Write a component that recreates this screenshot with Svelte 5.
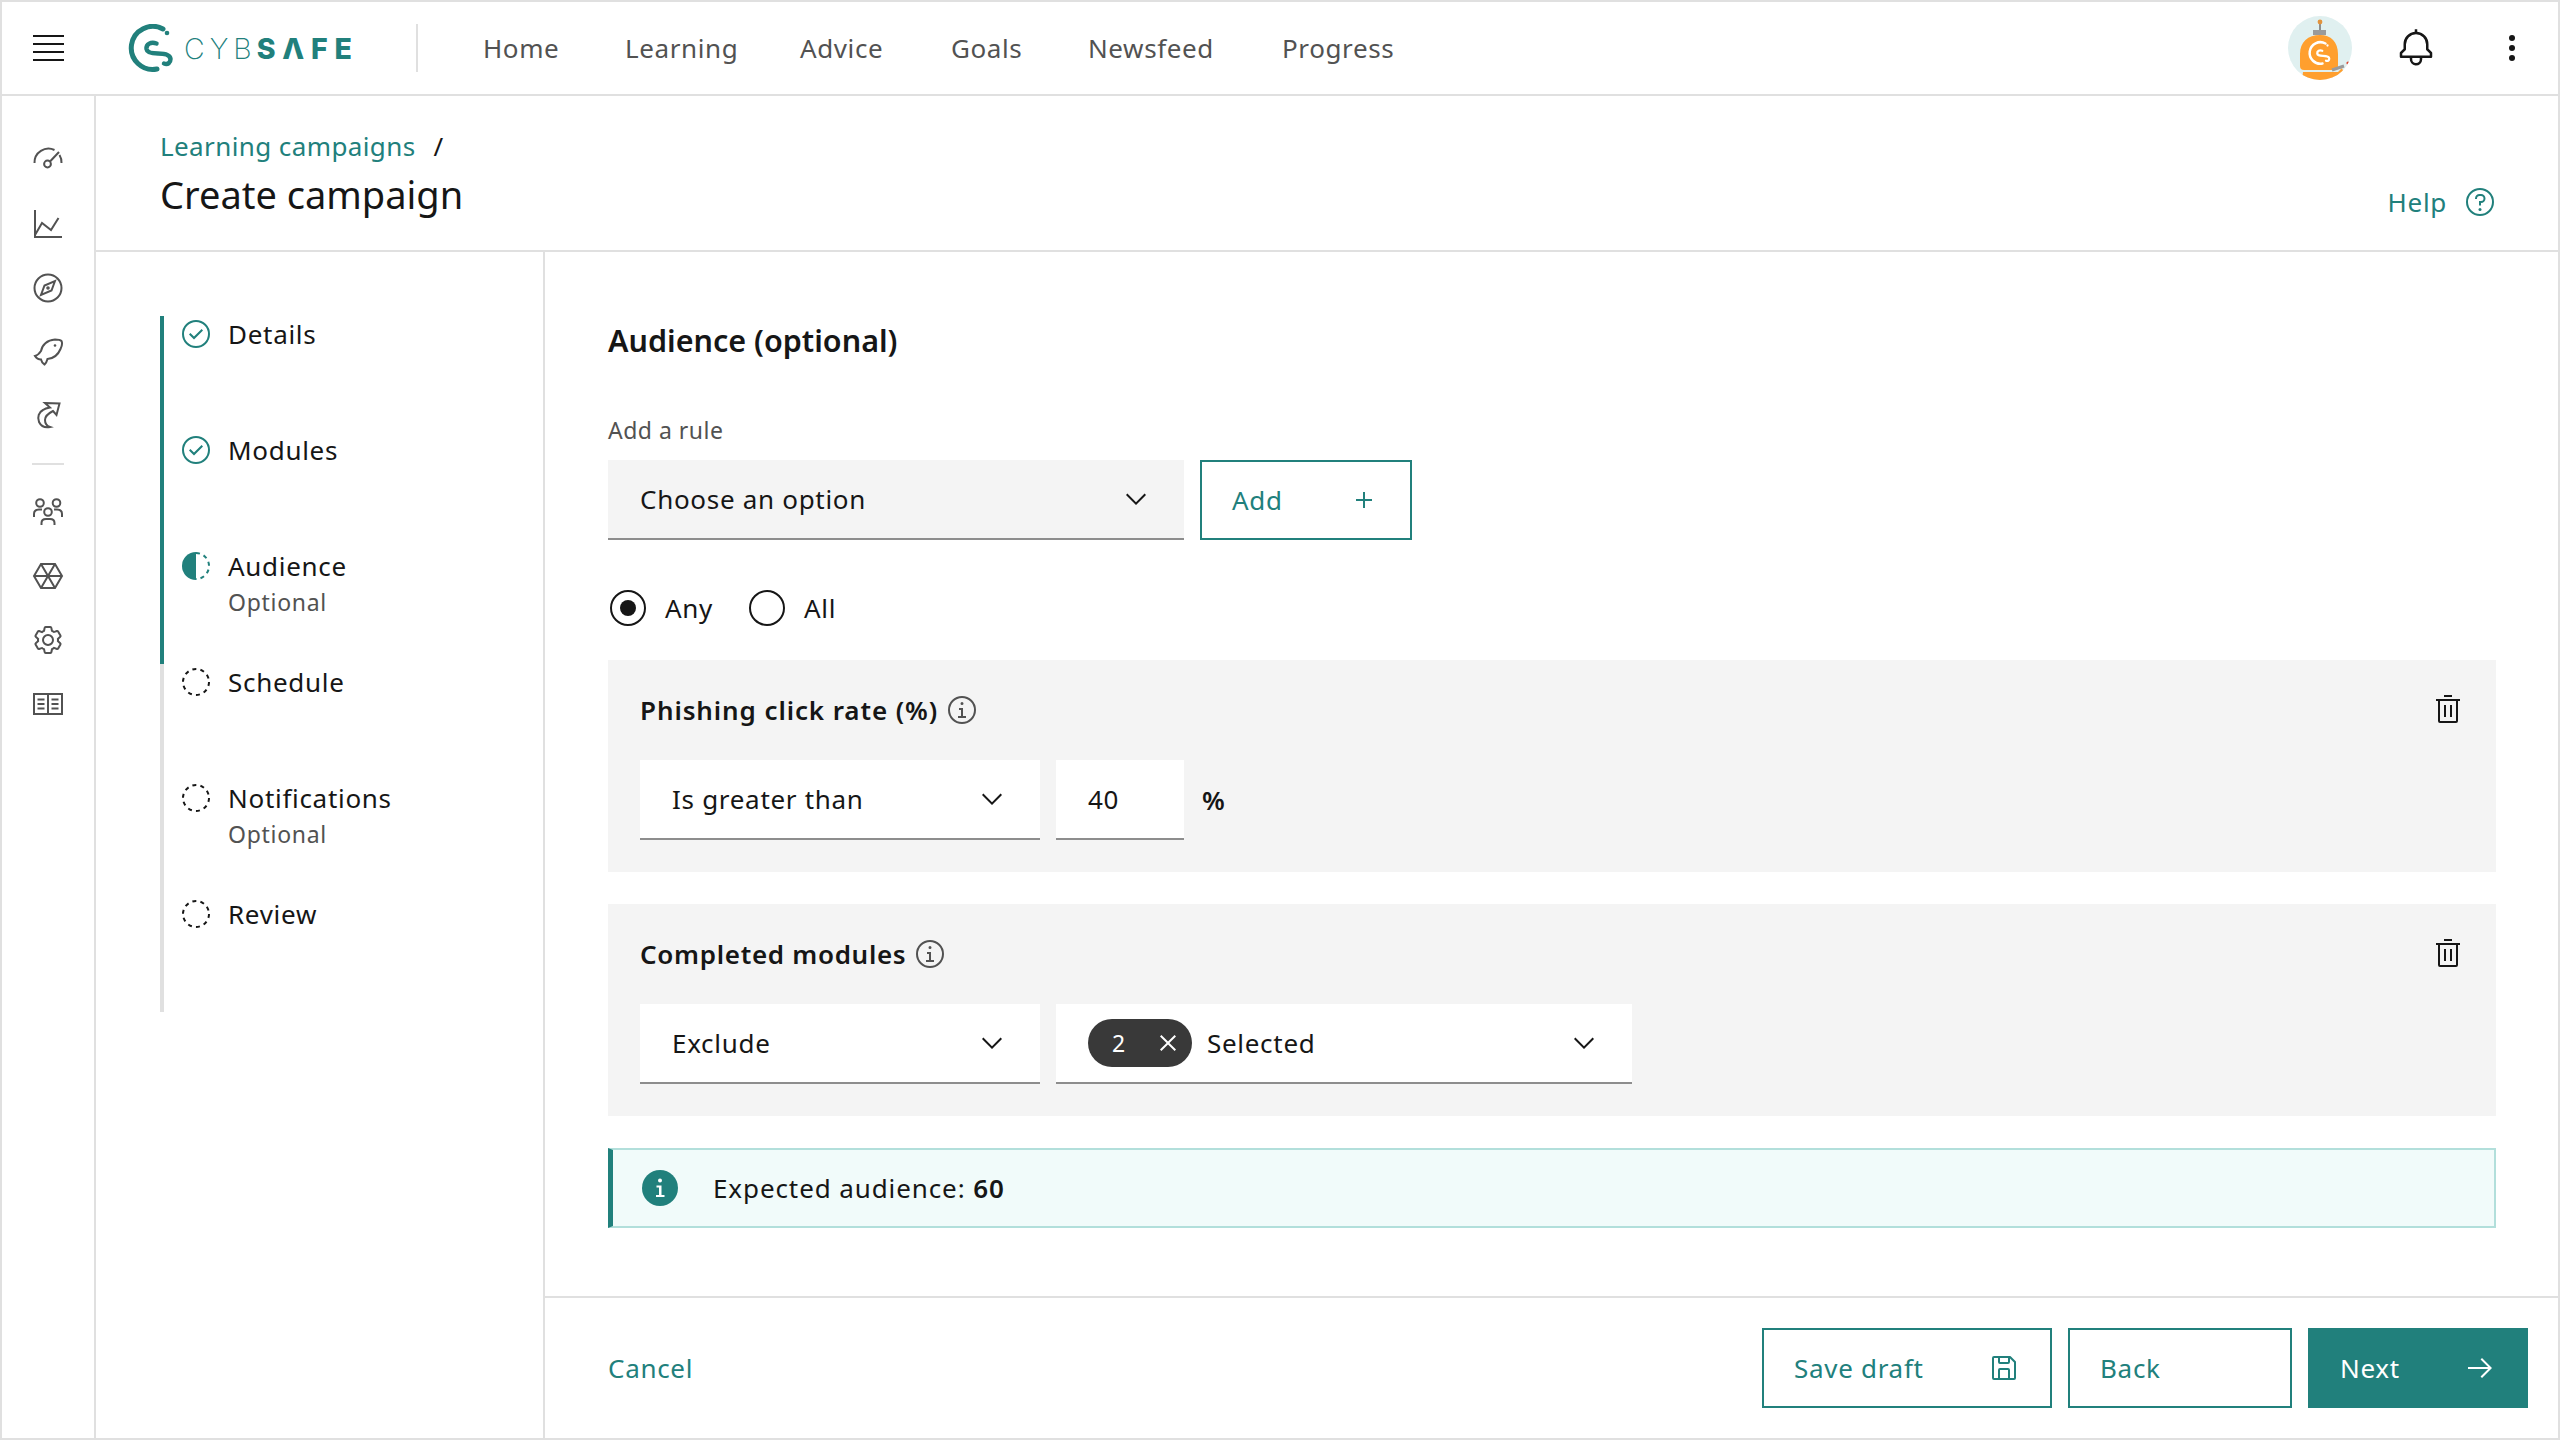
<script>
	const navItems = ['Home', 'Learning', 'Advice', 'Goals', 'Newsfeed', 'Progress'];

	const steps = [
		{ label: 'Details', state: 'done' },
		{ label: 'Modules', state: 'done' },
		{ label: 'Audience', note: 'Optional', state: 'current' },
		{ label: 'Schedule', state: 'todo' },
		{ label: 'Notifications', note: 'Optional', state: 'todo' },
		{ label: 'Review', state: 'todo' }
	];

	const chevron = 'M16 22L6 12 7.4 10.6 16 19.2 24.6 10.6 26 12z';
	const infoDot = 'M17 22L17 14 13 14 13 16 15 16 15 22 12 22 12 24 20 24 20 22 17 22zM16 8a1.5 1.5 0 101.5 1.5A1.5 1.5 0 0016 8z';
	const ring = 'M16,30A14,14,0,1,1,30,16,14,14,0,0,1,16,30ZM16,4A12,12,0,1,0,28,16,12,12,0,0,0,16,4Z';
	const trash = 'M12 12H14V24H12zM18 12H20V24H18zM4 6V8H6V28a2 2 0 002 2H24a2 2 0 002-2V8h2V6zM8 28V8H24V28zM12 2H20V4H12z';
</script>

{#snippet icon(d, cls = 'i32')}
	<svg class={cls} viewBox="0 0 32 32" fill="currentColor" aria-hidden="true"><path {d} /></svg>
{/snippet}

{#snippet logoMark()}
	<path d="M35 5A21.5 21.5 0 1 0 29 45" fill="none" stroke-width="5" stroke-linecap="round" />
	<path d="M28.5 19.5C23 17.5 18 20 18.5 25C19 29 24 29.5 30 29.5C36 29.5 42 30 42.5 35C42.5 38.5 40 41 36 39.5" fill="none" stroke-width="4.5" stroke-linecap="round" />
{/snippet}

<div class="app">
	<header class="topbar">
		<button class="burger" aria-label="Menu"><span></span><span></span><span></span><span></span></button>
		<div class="logo" aria-label="CybSafe">
			<svg class="logo-mark" viewBox="0 0 48 48" stroke="#21807c">
				{@render logoMark()}
				<circle cx="39" cy="9" r="2.3" fill="#21807c" stroke="none" />
			</svg>
			<span class="logo-text"><span class="thin">CYB</span><b>SΛFE</b></span>
		</div>
		<nav class="nav">
			{#each navItems as item}
				<a href="#top">{item}</a>
			{/each}
		</nav>
		<div class="top-actions">
			<svg class="avatar" viewBox="0 0 64 64" aria-hidden="true">
				<clipPath id="avatar-clip"><circle cx="32" cy="32" r="32" /></clipPath>
				<g clip-path="url(#avatar-clip)">
					<rect width="64" height="64" fill="#e0f0f0" />
					<rect x="31" y="6" width="2" height="10" fill="#8f8f8f" />
					<circle cx="32" cy="6" r="2.4" fill="#e2933d" />
					<rect x="25" y="14" width="13" height="5" fill="#9a9a9a" />
					<path d="M12 54V38C12 26 20 19 32 19C43 19 50 26 50 38V50Q50 54 46 54H16Q12 54 12 50Z" fill="#ff9f2e" />
					<path d="M15 56H42L50 56L54 52L58 64H14Z" fill="#ff9f2e" />
					<path d="M44 54L56 50" stroke="#9a9a9a" stroke-width="3" />
					<circle cx="60" cy="47" r="1.6" fill="#d9442f" />
					<g transform="translate(20 25) scale(0.5)" stroke="#fff">
						{@render logoMark()}
						<circle cx="39" cy="9" r="2.3" fill="#fff" stroke="none" />
					</g>
				</g>
			</svg>
			<svg class="bell" viewBox="0 0 32 32" fill="currentColor" aria-hidden="true">
				<path d="M28.7071,19.293,26,16.5859V13a10.0136,10.0136,0,0,0-9-9.9492V1H15V3.0508A10.0136,10.0136,0,0,0,6,13v3.5859L3.2929,19.293A1,1,0,0,0,3,20v3a1,1,0,0,0,1,1h7v.7768a5.152,5.152,0,0,0,4.5,5.1987A5.0057,5.0057,0,0,0,21,25V24h7a1,1,0,0,0,1-1V20A1,1,0,0,0,28.7071,19.293ZM19,25a3,3,0,0,1-6,0V24h6Zm8-3H5V20.4141L7.707,17.707A1,1,0,0,0,8,17V13a8,8,0,0,1,16,0v4a1,1,0,0,0,.293.707L27,20.4141Z" />
			</svg>
			<div class="kebab"><i></i><i></i><i></i></div>
		</div>
	</header>

	<div class="shell">
		<aside class="rail">
			<svg class="rail-icon" viewBox="0 0 32 32">
				<path d="M2.5 19A14 14 0 0 1 22.5 6" /><path d="M27.5 11A14 14 0 0 1 29.5 19" /><circle cx="15.5" cy="20" r="3.4" /><path d="M18 17.5L27 8" />
			</svg>
			<svg class="rail-icon" viewBox="0 0 32 32"><path d="M3 2V29H30" /><path d="M3 27L10 15L19 22L26.5 10" /></svg>
			<svg class="rail-icon" viewBox="0 0 32 32">
				<circle cx="16" cy="16" r="13.5" /><path d="M23 9L19.5 18.5L9 23L12.5 13.5Z" /><circle cx="16" cy="16" r="0.8" />
			</svg>
			<svg class="rail-icon" viewBox="0 0 32 32">
				<path d="M3 20C5 19.5 7 18 9 15C10 9 15 4 23 3.5C26 3.5 28 3.5 29.5 5C30.5 7 30 10 28.5 13C26 19 21 22.5 15.5 23C15 25 14 27 12.5 28.5C10.5 27.5 9.5 25.5 9 23.5C7 23.5 4.5 22.5 3 20Z" /><circle cx="23" cy="9.5" r="1.3" fill="#525252" stroke="none" />
			</svg>
			<svg class="rail-icon" viewBox="0 0 32 32">
				<path d="M13 3L27.5 3.5L24.5 15L21 11C17 13 13 16 13 20C13 23 15 26 18 27C13 28 9 26 7 22C5 17 7 12 11 10C13 8.5 15 8 18 7.5Z" />
			</svg>
			<div class="rail-rule"></div>
			<svg class="rail-icon" viewBox="0 0 32 32">
				<circle cx="8" cy="7" r="3.8" /><circle cx="24.5" cy="7" r="3.8" /><circle cx="16" cy="16" r="3.8" />
				<path d="M2 21V18C2 14.5 4 13.5 7 13.5H10" /><path d="M30 21V18C30 14.5 28 13.5 25 13.5H22" />
				<path d="M9.5 29V27C9.5 24 12 23 14 23H18C20 23 22.5 24 22.5 27V29" />
			</svg>
			<svg class="rail-icon" viewBox="0 0 32 32">
				<path d="M2 16L9 4H23L30 16L23 28H9Z" /><path d="M9 4L23 28M23 4L9 28M2 16H30" />
			</svg>
			<svg class="rail-gear" viewBox="0 0 32 32" fill="#525252">
				<path d="M27,16.76c0-.25,0-.5,0-.76s0-.51,0-.77l1.92-1.68A2,2,0,0,0,29.3,11L26.94,7a2,2,0,0,0-1.73-1,2,2,0,0,0-.64.1l-2.43.82a11.35,11.35,0,0,0-1.31-.75l-.51-2.52a2,2,0,0,0-2-1.61H13.64a2,2,0,0,0-2,1.61l-.51,2.52a11.48,11.48,0,0,0-1.32.75L7.43,6.06A2,2,0,0,0,6.79,6,2,2,0,0,0,5.06,7L2.7,11a2,2,0,0,0,.41,2.51L5,15.24c0,.25,0,.5,0,.76s0,.51,0,.77L3.11,18.45A2,2,0,0,0,2.7,21L5.06,25a2,2,0,0,0,1.73,1,2,2,0,0,0,.64-.1l2.43-.82a11.35,11.35,0,0,0,1.31.75l.51,2.52a2,2,0,0,0,2,1.61h4.72a2,2,0,0,0,2-1.61l.51-2.52a11.48,11.48,0,0,0,1.32-.75l2.42.82a2,2,0,0,0,.64.1,2,2,0,0,0,1.73-1L29.3,21a2,2,0,0,0-.41-2.51ZM25.21,24l-3.43-1.16a8.86,8.86,0,0,1-2.71,1.57L18.36,28H13.64l-.71-3.55a9.36,9.36,0,0,1-2.7-1.57L6.79,24,4.43,20l2.72-2.4a8.9,8.9,0,0,1,0-3.13L4.43,12,6.79,8l3.43,1.16a8.86,8.86,0,0,1,2.71-1.57L13.64,4h4.72l.71,3.55a9.36,9.36,0,0,1,2.7,1.57L25.21,8,27.57,12l-2.72,2.4a8.9,8.9,0,0,1,0,3.13L27.57,20Z" />
				<path d="M16,22a6,6,0,1,1,6-6A5.94,5.94,0,0,1,16,22Zm0-10a3.91,3.91,0,0,0-4,4,3.91,3.91,0,0,0,4,4,3.91,3.91,0,0,0,4-4A3.91,3.91,0,0,0,16,12Z" />
			</svg>
			<svg class="rail-icon" viewBox="0 0 32 32">
				<path d="M2 6H30V26H2Z" /><path d="M16 6V26M5.5 11.5H12.5M5.5 16H12.5M5.5 20.5H12.5M19.5 11.5H26.5M19.5 16H26.5M19.5 20.5H26.5" />
			</svg>
		</aside>

		<div class="page">
			<div class="page-head">
				<div>
					<div class="crumbs"><a href="#top">Learning campaigns</a><span class="slash">/</span></div>
					<h1>Create campaign</h1>
				</div>
				<a class="help" href="#top">Help
					<svg class="i32" viewBox="0 0 32 32" fill="currentColor" aria-hidden="true">
						<path d="M16,2A14,14,0,1,0,30,16,14,14,0,0,0,16,2Zm0,26A12,12,0,1,1,28,16,12,12,0,0,1,16,28Z" />
						<circle cx="16" cy="23.5" r="1.5" />
						<path d="M17,8H15.5A4.49,4.49,0,0,0,11,12.5V13h2v-.5A2.5,2.5,0,0,1,15.5,10H17a2.5,2.5,0,0,1,0,5H15v4.5h2V17a4.5,4.5,0,0,0,0-9Z" />
					</svg>
				</a>
			</div>

			<div class="page-body">
				<ol class="steps">
					{#each steps as step}
						<li class="step" class:reached={step.state !== 'todo'}>
							<svg class="i32 step-icon" viewBox="0 0 32 32" aria-hidden="true">
								{#if step.state === 'done'}
									<circle cx="16" cy="16" r="13" fill="none" stroke="#21807c" stroke-width="2" />
									<path d="M14 21.414L9 16.413 10.413 15 14 18.586 21.585 11 23 12.415 14 21.414z" fill="#21807c" />
								{:else if step.state === 'current'}
									<path d="M16 2A14 14 0 0 0 16 30Z" fill="#21807c" />
									<path d="M16 3A13 13 0 0 1 16 29" fill="none" stroke="#21807c" stroke-width="2" stroke-dasharray="4 4" />
								{:else}
									<circle cx="16" cy="16" r="13" fill="none" stroke="#161616" stroke-width="2" stroke-dasharray="4 4.17" />
								{/if}
							</svg>
							<div>
								<div class="step-label">{step.label}</div>
								{#if step.note}<div class="step-note">{step.note}</div>{/if}
							</div>
						</li>
					{/each}
				</ol>

				<main class="form">
					<div class="form-body">
						<h2>Audience (optional)</h2>
						<div class="field-label">Add a rule</div>
						<div class="add-row">
							<div class="select grey w576">Choose an option {@render icon(chevron)}</div>
							<button class="btn ghost add">Add {@render icon('M17 15V8h-2v7H8v2h7v7h2V17h7V15z')}</button>
						</div>

						<div class="radios">
							<label class="radio"><span class="dot on"></span>Any</label>
							<label class="radio"><span class="dot"></span>All</label>
						</div>

						<section class="rule">
							<div class="rule-head">
								<div class="rule-title phishing">Phishing click rate (%)
									<svg class="i32" viewBox="0 0 32 32" fill="#525252" aria-hidden="true"><path d={infoDot} /><path d={ring} /></svg>
								</div>
								{@render icon(trash, 'i32 bin')}
							</div>
							<div class="rule-fields">
								<div class="select w400">Is greater than {@render icon(chevron)}</div>
								<div class="select w128">40</div>
								<b class="unit">%</b>
							</div>
						</section>

						<section class="rule">
							<div class="rule-head">
								<div class="rule-title">Completed modules
									<svg class="i32" viewBox="0 0 32 32" fill="#525252" aria-hidden="true"><path d={infoDot} /><path d={ring} /></svg>
								</div>
								{@render icon(trash, 'i32 bin')}
							</div>
							<div class="rule-fields">
								<div class="select w400">Exclude {@render icon(chevron)}</div>
								<div class="select w576 multi">
									<span class="multi-left">
										<span class="tag">2 {@render icon('M24 9.4L22.6 8 16 14.6 9.4 8 8 9.4 14.6 16 8 22.6 9.4 24 16 17.4 22.6 24 24 22.6 17.4 16 24 9.4z')}</span>
										Selected
									</span>
									{@render icon(chevron)}
								</div>
							</div>
						</section>

						<div class="notice">
							<svg class="notice-icon" viewBox="0 0 36 36" aria-hidden="true">
								<circle cx="18" cy="18" r="18" fill="#21807c" />
								<circle cx="18" cy="10.5" r="2" fill="#fff" />
								<path d="M14.5 15.5H19.5V25H22.5V27H14V25H17V17.5H14.5Z" fill="#fff" />
							</svg>
							<span>Expected audience: <b>60</b></span>
						</div>
					</div>

					<footer class="form-foot">
						<a class="cancel" href="#top">Cancel</a>
						<div class="foot-actions">
							<button class="btn ghost save">Save draft
								{@render icon('M27.71,9.29l-5-5A1,1,0,0,0,22,4H6A2,2,0,0,0,4,6V26a2,2,0,0,0,2,2H26a2,2,0,0,0,2-2V10A1,1,0,0,0,27.71,9.29ZM12,6h8v4H12Zm8,20H12V18h8Zm2,0V18a2,2,0,0,0-2-2H12a2,2,0,0,0-2,2v8H6V6h4v4a2,2,0,0,0,2,2h8a2,2,0,0,0,2-2V6.41l4,4V26Z')}
							</button>
							<button class="btn ghost back">Back</button>
							<button class="btn primary next">Next {@render icon('M18 6L16.57 7.393 24.15 15 4 15 4 17 24.15 17 16.57 24.573 18 26 28 16 18 6z')}</button>
						</div>
					</footer>
				</main>
			</div>
		</div>
	</div>
</div>

<style>
	:global(body) {
		margin: 0;
		background: #fff;
		color: #161616;
		font-family: 'Noto Sans', 'Liberation Sans', sans-serif;
		font-size: 26px;
		letter-spacing: 0.7px;
	}

	a {
		color: #21807c;
		text-decoration: none;
	}

	button {
		font: inherit;
		letter-spacing: inherit;
		cursor: pointer;
	}

	.app {
		box-sizing: border-box;
		width: 2560px;
		height: 1440px;
		border: 2px solid #e0e0e0;
		display: flex;
		flex-direction: column;
		overflow: hidden;
	}

	.i32 {
		width: 32px;
		height: 32px;
		flex: none;
	}

	/* top bar */
	.topbar {
		box-sizing: border-box;
		height: 94px;
		flex: none;
		display: flex;
		align-items: center;
		border-bottom: 2px solid #e0e0e0;
	}

	.burger {
		width: 92px;
		height: 92px;
		flex: none;
		padding: 0 30px 0 31px;
		border: 0;
		background: none;
		display: flex;
		flex-direction: column;
		justify-content: center;
		gap: 5.5px;
	}

	.burger span {
		display: block;
		height: 2.5px;
		background: #161616;
	}

	.logo {
		display: flex;
		align-items: center;
		gap: 8px;
		width: 288px;
		flex: none;
		margin-left: 34px;
		height: 48px;
		border-right: 2px solid #e0e0e0;
	}

	.logo-mark {
		width: 48px;
		height: 48px;
		flex: none;
	}

	.logo-text {
		font-family: Inter, 'Liberation Sans', sans-serif;
		font-size: 28.5px;
		letter-spacing: 5px;
		color: #21807c;
		white-space: nowrap;
	}

	.logo-text .thin {
		font-weight: 200;
	}

	.logo-text b {
		font-weight: 800;
		letter-spacing: 6.8px;
	}

	.nav {
		display: grid;
		grid-template-columns: 142px 175px 151px 137px 194px auto;
		margin-left: 65px;
	}

	.nav a {
		color: #525252;
		white-space: nowrap;
		letter-spacing: 0.6px;
	}

	.top-actions {
		margin-left: auto;
		display: flex;
		align-items: center;
	}

	.avatar {
		width: 64px;
		height: 64px;
		margin-right: 44px;
	}

	.bell {
		width: 40px;
		height: 40px;
		margin-right: 73px;
	}

	.kebab {
		display: flex;
		flex-direction: column;
		gap: 4px;
		margin-right: 43px;
	}

	.kebab i {
		display: block;
		width: 6px;
		height: 6px;
		border-radius: 50%;
		background: #161616;
	}

	/* shell */
	.shell {
		flex: 1;
		display: flex;
		min-height: 0;
	}

	.rail {
		box-sizing: border-box;
		width: 94px;
		flex: none;
		border-right: 2px solid #e0e0e0;
		padding-top: 48px;
		display: flex;
		flex-direction: column;
		align-items: center;
		gap: 32px;
	}

	.rail-icon {
		width: 32px;
		height: 32px;
		fill: none;
		stroke: #525252;
		stroke-width: 2;
	}

	.rail-gear {
		width: 32px;
		height: 32px;
	}

	.rail-rule {
		width: 32px;
		height: 2px;
		background: #e0e0e0;
		margin: -1px 0;
	}

	.page {
		flex: 1;
		min-width: 0;
		display: flex;
		flex-direction: column;
	}

	.page-head {
		box-sizing: border-box;
		height: 156px;
		flex: none;
		border-bottom: 2px solid #e0e0e0;
		padding: 32px 62px 0 64px;
		display: flex;
		justify-content: space-between;
		align-items: flex-start;
	}

	.crumbs {
		line-height: 36px;
		display: flex;
		letter-spacing: 0.4px;
	}

	.slash {
		margin-left: 18px;
	}

	h1 {
		margin: 5px 0 0;
		font-size: 38px;
		font-weight: 400;
		line-height: 50px;
		letter-spacing: 0;
	}

	.help {
		margin-top: 58px;
		display: flex;
		align-items: center;
		gap: 17px;
		line-height: 32px;
	}

	.page-body {
		flex: 1;
		display: flex;
		min-height: 0;
	}

	/* steps */
	.steps {
		box-sizing: border-box;
		width: 449px;
		flex: none;
		margin: 0;
		padding: 64px 0 0 64px;
		list-style: none;
		border-right: 2px solid #e0e0e0;
	}

	.step {
		height: 116px;
		box-sizing: border-box;
		border-left: 4px solid #e0e0e0;
		padding-left: 16px;
		display: flex;
		gap: 16px;
	}

	.step.reached {
		border-left-color: #21807c;
	}

	.step-icon {
		margin-top: 2px;
	}

	.step-label {
		line-height: 36px;
	}

	.step-note {
		font-size: 23px;
		line-height: 36px;
		color: #525252;
	}

	/* form */
	.form {
		flex: 1;
		min-width: 0;
		display: flex;
		flex-direction: column;
	}

	.form-body {
		flex: 1;
		padding: 69px 62px 0 63px;
	}

	h2 {
		margin: 0;
		font-size: 30.5px;
		font-weight: 600;
		line-height: 38px;
		letter-spacing: 0;
	}

	.field-label {
		margin-top: 57px;
		font-size: 23px;
		line-height: 28px;
		color: #525252;
		letter-spacing: 0.5px;
	}

	.add-row {
		display: flex;
		gap: 16px;
		margin-top: 16px;
	}

	.select {
		box-sizing: border-box;
		height: 80px;
		background: #fff;
		border-bottom: 2px solid #8d8d8d;
		padding: 0 32px;
		display: flex;
		align-items: center;
		justify-content: space-between;
		flex: none;
	}

	.select.grey {
		background: #f4f4f4;
	}

	.w576 {
		width: 576px;
	}

	.w400 {
		width: 400px;
	}

	.w128 {
		width: 128px;
	}

	.btn {
		box-sizing: border-box;
		height: 80px;
		padding: 0 30px;
		display: flex;
		align-items: center;
		justify-content: space-between;
		text-align: left;
		flex: none;
	}

	.ghost {
		background: #fff;
		border: 2px solid #21807c;
		color: #21807c;
	}

	.primary {
		background: #21807c;
		border: 2px solid #21807c;
		color: #fff;
	}

	.add {
		width: 212px;
	}

	.radios {
		display: flex;
		gap: 36px;
		margin-top: 50px;
		padding-left: 2px;
	}

	.radio {
		display: flex;
		align-items: center;
		gap: 19px;
		line-height: 36px;
	}

	.dot {
		box-sizing: border-box;
		width: 36px;
		height: 36px;
		border: 2.5px solid #161616;
		border-radius: 50%;
		display: flex;
		align-items: center;
		justify-content: center;
	}

	.dot.on::after {
		content: '';
		width: 16px;
		height: 16px;
		border-radius: 50%;
		background: #161616;
	}

	.rule {
		background: #f4f4f4;
		padding: 32px;
		margin-top: 32px;
	}

	.radios + .rule {
		margin-top: 34px;
	}

	.rule-head {
		display: flex;
		justify-content: space-between;
		align-items: center;
		height: 36px;
	}

	.rule-title {
		display: flex;
		align-items: center;
		gap: 8px;
		font-weight: 600;
	}

	.rule-title.phishing {
		letter-spacing: 0.9px;
	}

	.bin {
		margin-top: -3px;
	}

	.rule-fields {
		display: flex;
		align-items: center;
		gap: 16px;
		margin-top: 32px;
	}

	.unit {
		margin-left: 2px;
		font-weight: 600;
	}

	.multi-left {
		display: flex;
		align-items: center;
		gap: 15px;
	}

	.tag {
		box-sizing: border-box;
		width: 104px;
		height: 48px;
		border-radius: 24px;
		background: #393939;
		color: #fff;
		font-size: 23px;
		padding: 0 8px 0 24px;
		display: flex;
		align-items: center;
		justify-content: space-between;
	}

	.notice {
		box-sizing: border-box;
		height: 80px;
		margin-top: 32px;
		background: #f1fbfa;
		border: 2px solid #b2dfdb;
		border-left: 5px solid #21807c;
		display: flex;
		align-items: center;
		gap: 35px;
		padding-left: 29px;
		letter-spacing: 0.9px;
	}

	.notice-icon {
		width: 36px;
		height: 36px;
	}

	.notice b {
		font-weight: 600;
	}

	.form-foot {
		box-sizing: border-box;
		height: 142px;
		flex: none;
		border-top: 2px solid #e0e0e0;
		padding: 0 30px 0 63px;
		display: flex;
		align-items: center;
		justify-content: space-between;
	}

	.foot-actions {
		display: flex;
		gap: 16px;
	}

	.save {
		width: 290px;
	}

	.back {
		width: 224px;
	}

	.next {
		width: 220px;
	}
</style>
